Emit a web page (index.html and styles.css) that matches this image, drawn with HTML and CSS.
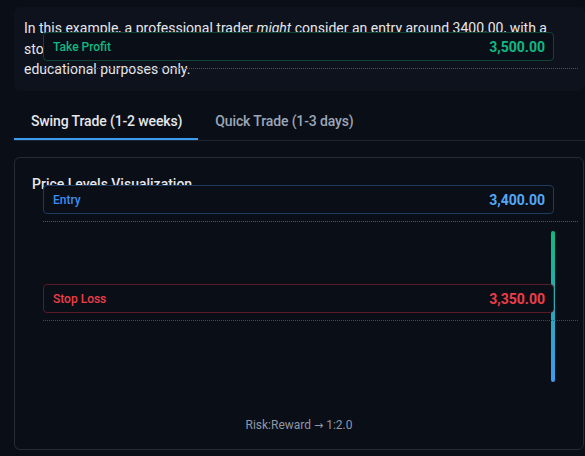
FILE: index.html
```html
<!DOCTYPE html>
<html lang="en">
<head>
<meta charset="utf-8">
<title>Trade Example</title>
<link rel="stylesheet" href="styles.css">
</head>
<body>
<div class="page">
  <div class="note">
    <p>In this example, a professional trader <em>might</em> consider an entry around 3400.00, with a stop loss around 3350.00 and a take-profit target near 3500.00. This example is for educational purposes only.</p>
  </div>

  <div class="tabs">
    <button class="tab active">Swing Trade (1-2 weeks)</button>
    <button class="tab">Quick Trade (1-3 days)</button>
  </div>

  <section class="card">
    <h3 class="card-title">Price Levels Visualization</h3>
    <div class="chart">
      <div class="bar" style="top:37px;height:151px"></div>
      <div class="level tp" style="top:-126px">
        <div class="tag"><span class="name">Take Profit</span><span class="price">3,500.00</span></div>
      </div>
      <div class="level entry" style="top:27px">
        <div class="tag"><span class="name">Entry</span><span class="price">3,400.00</span></div>
      </div>
      <div class="level sl" style="top:126px">
        <div class="tag"><span class="name">Stop Loss</span><span class="price">3,350.00</span></div>
      </div>
    </div>
    <p class="rr">Risk:Reward <span class="arrow">→</span> 1:2.0</p>
  </section>
</div>
</body>
</html>
```

FILE: styles.css
```css
* { box-sizing: border-box; }
html, body { margin: 0; padding: 0; }
body {
  background: #0a0e17;
  color: #e5e7eb;
  font-family: Roboto, "Liberation Sans", sans-serif;
  overflow: hidden;
  width: 585px;
  height: 456px;
}
.page {
  padding: 7px 0 0 14px;
  width: 585px;
}
.note {
  background: #0e121c;
  border-radius: 6px;
  padding: 11px 10px 11.5px 10px;
  width: 571px;
}
.note p {
  margin: 0;
  font-size: 14px;
  line-height: 20.5px;
  color: #e5e7eb;
}
.tabs {
  display: flex;
  margin-top: 9px;
  width: 571px;
  border-bottom: 1px solid #1f2530;
}
.tab {
  background: none;
  border: none;
  font-family: inherit;
  font-size: 14px;
  font-weight: 500;
  line-height: 20px;
  letter-spacing: -0.13px;
  padding: 11px 16px 9px 17px;
  color: #9aa6b8;
  cursor: pointer;
}
.tab.active {
  color: #e5e7eb;
  box-shadow: inset 0 -2px 0 #3b9cf0;
}
.card {
  margin-top: 16px;
  width: 570px;
  border: 1px solid #262b36;
  border-radius: 6px;
  padding: 16px 17px 15px 17px;
}
.card-title {
  margin: 0;
  font-size: 14px;
  font-weight: 500;
  line-height: 20px;
  color: #e5e7eb;
}
.chart {
  position: relative;
  height: 212px;
}
.bar {
  position: absolute;
  left: 519px;
  width: 4px;
  border-radius: 2px;
  background: linear-gradient(to bottom, #10b981, #3b9cf0 100%);
}
.level {
  position: absolute;
  left: 11px;
  right: -12px;
  height: 0;
  border-top: 1px dotted;
}
.tag {
  position: absolute;
  left: 0;
  right: 24px;
  bottom: 8px;
  height: 29px;
  display: flex;
  align-items: center;
  justify-content: space-between;
  padding: 0 8px 0 9px;
  background: #0a0e17;
  border: 1px solid;
  border-radius: 4px;
}
.name {
  font-size: 12px;
  font-weight: 500;
}
.price {
  font-size: 14px;
  font-weight: 700;
}
.tp { border-color: #1d6b5a; }
.tp .tag { border-color: #124436; color: #10b981; }
.entry { border-color: #345d8a; }
.entry .tag { border-color: #1e3a5c; color: #3b8ef0; }
.entry .price { color: #55a8f5; }
.sl { border-color: #8a2b3a; }
.sl .tag { border-color: #5a1a26; color: #ef3d47; }
.rr {
  margin: 11px 0 0;
  text-align: center;
  font-size: 12px;
  line-height: 16px;
  color: #8c97a8;
}
.arrow {
  font-family: "DejaVu Sans", sans-serif;
  font-size: 11px;
}
```
